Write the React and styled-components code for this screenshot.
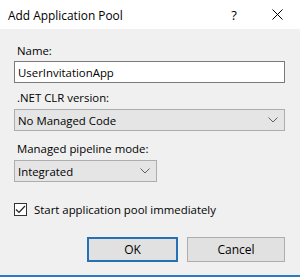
import React from 'react';
import styled, { createGlobalStyle } from 'styled-components';

const Global = createGlobalStyle`
  html, body { margin: 0; padding: 0; background: #f0f0f0; }
  * { box-sizing: border-box; }
`;

const Window = styled.div`
  width: 300px;
  height: 277px;
  display: flex;
  flex-direction: column;
  background: #f0f0f0;
  border-bottom: 2px solid #2b7bc0;
  font-family: "Open Sans", "Noto Sans", sans-serif;
  font-size: 11.4px;
  color: #000;
`;

const TitleBar = styled.div`
  height: 29px;
  background: #fff;
  display: flex;
  align-items: center;
  padding-left: 8px;
`;

const Title = styled.div`
  flex: 1;
  font-size: 11.9px;
`;

const TitleButton = styled.div`
  width: ${p => p.w}px;
  height: 29px;
  display: flex;
  align-items: center;
  justify-content: center;
  font-size: 13px;
`;

const Body = styled.div`
  flex: 1;
  display: flex;
  flex-direction: column;
  padding: 14px 15px 0 14px;
`;

const Label = styled.div`
  line-height: 16px;
  padding-left: 3px;
  margin-bottom: ${p => p.mb || 2}px;
`;

const Input = styled.div`
  height: 22px;
  background: #fff;
  border: 1px solid #7a7a7a;
  display: flex;
  align-items: center;
  padding-left: 3px;
  margin-bottom: 7px;
`;

const Select = styled.div`
  width: ${p => p.w ? p.w + 'px' : '100%'};
  height: 22px;
  background: #e5e5e5;
  border: 1px solid #adadad;
  display: flex;
  align-items: center;
  justify-content: space-between;
  padding: 0 6px 0 3px;
  margin-bottom: ${p => p.mb}px;
`;

const Check = styled.div`
  display: flex;
  align-items: center;
  gap: 7px;
`;

const Box = styled.div`
  width: 13px;
  height: 13px;
  border: 1px solid #333;
  background: #fff;
  display: flex;
  align-items: center;
  justify-content: center;
`;

const Buttons = styled.div`
  display: flex;
  justify-content: flex-end;
  gap: 9px;
  margin-top: 20px;
`;

const Button = styled.div`
  width: ${p => p.w}px;
  height: 25px;
  background: #e1e1e1;
  border: ${p => p.primary ? '2px solid #2670b5' : '1px solid #adadad'};
  display: flex;
  align-items: center;
  justify-content: center;
  font-size: 12px;
`;

const Chevron = () => (
  <svg width="10" height="6" viewBox="0 0 10 6">
    <path d="M0.5 0.5 L5 5 L9.5 0.5" fill="none" stroke="#606060" strokeWidth="1" />
  </svg>
);

export default () => (
  <>
    <Global />
    <Window>
      <TitleBar>
        <Title>Add Application Pool</Title>
        <TitleButton w={40}>?</TitleButton>
        <TitleButton w={46}>
          <svg width="11" height="11" viewBox="0 0 11 11">
            <path d="M0.5 0.5 L10.5 10.5 M10.5 0.5 L0.5 10.5" stroke="#000" strokeWidth="1" />
          </svg>
        </TitleButton>
      </TitleBar>
      <Body>
        <Label>Name:</Label>
        <Input>UserInvitationApp</Input>
        <Label mb={3}>.NET CLR version:</Label>
        <Select mb={10}>No Managed Code<Chevron /></Select>
        <Label mb={3}>Managed pipeline mode:</Label>
        <Select w={143} mb={20}>Integrated<Chevron /></Select>
        <Check>
          <Box>
            <svg width="11" height="9" viewBox="0 0 11 9">
              <path d="M1 4.5 L4 7.5 L10 1" fill="none" stroke="#222" strokeWidth="1.2" />
            </svg>
          </Box>
          Start application pool immediately
        </Check>
        <Buttons>
          <Button primary w={91}>OK</Button>
          <Button w={98}>Cancel</Button>
        </Buttons>
      </Body>
    </Window>
  </>
);
